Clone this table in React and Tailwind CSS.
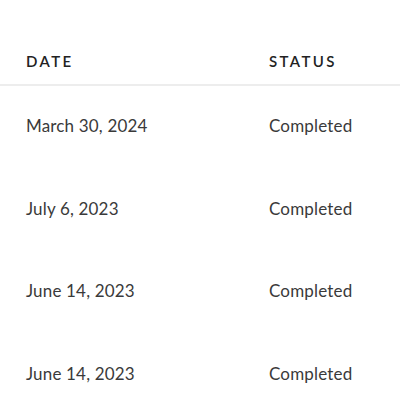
const rows = [
  { date: 'March 30, 2024', status: 'Completed' },
  { date: 'July 6, 2023', status: 'Completed' },
  { date: 'June 14, 2023', status: 'Completed' },
  { date: 'June 14, 2023', status: 'Completed' },
];

const App = () => {
  return (
    <div className="min-h-[413px] w-[400px] bg-white font-['Lato',sans-serif]">
      <div className="grid grid-cols-[243px_1fr] border-b-2 border-[#ededed] px-[26px] pb-[14px] pt-[52px]">
        <span className="text-[15px] font-semibold uppercase leading-[18px] tracking-[0.16em] text-[#222]">Date</span>
        <span className="text-[15px] font-semibold uppercase leading-[18px] tracking-[0.16em] text-[#222]">Status</span>
      </div>
      {rows.map((row, i) => (
        <div key={i} className="grid h-[82.5px] grid-cols-[243px_1fr] items-center px-[26px] pb-[3px] text-[17px] tracking-[0.01em] text-[#3a3a3a]">
          <span>{row.date}</span>
          <span>{row.status}</span>
        </div>
      ))}
    </div>
  );
};

export default App;
